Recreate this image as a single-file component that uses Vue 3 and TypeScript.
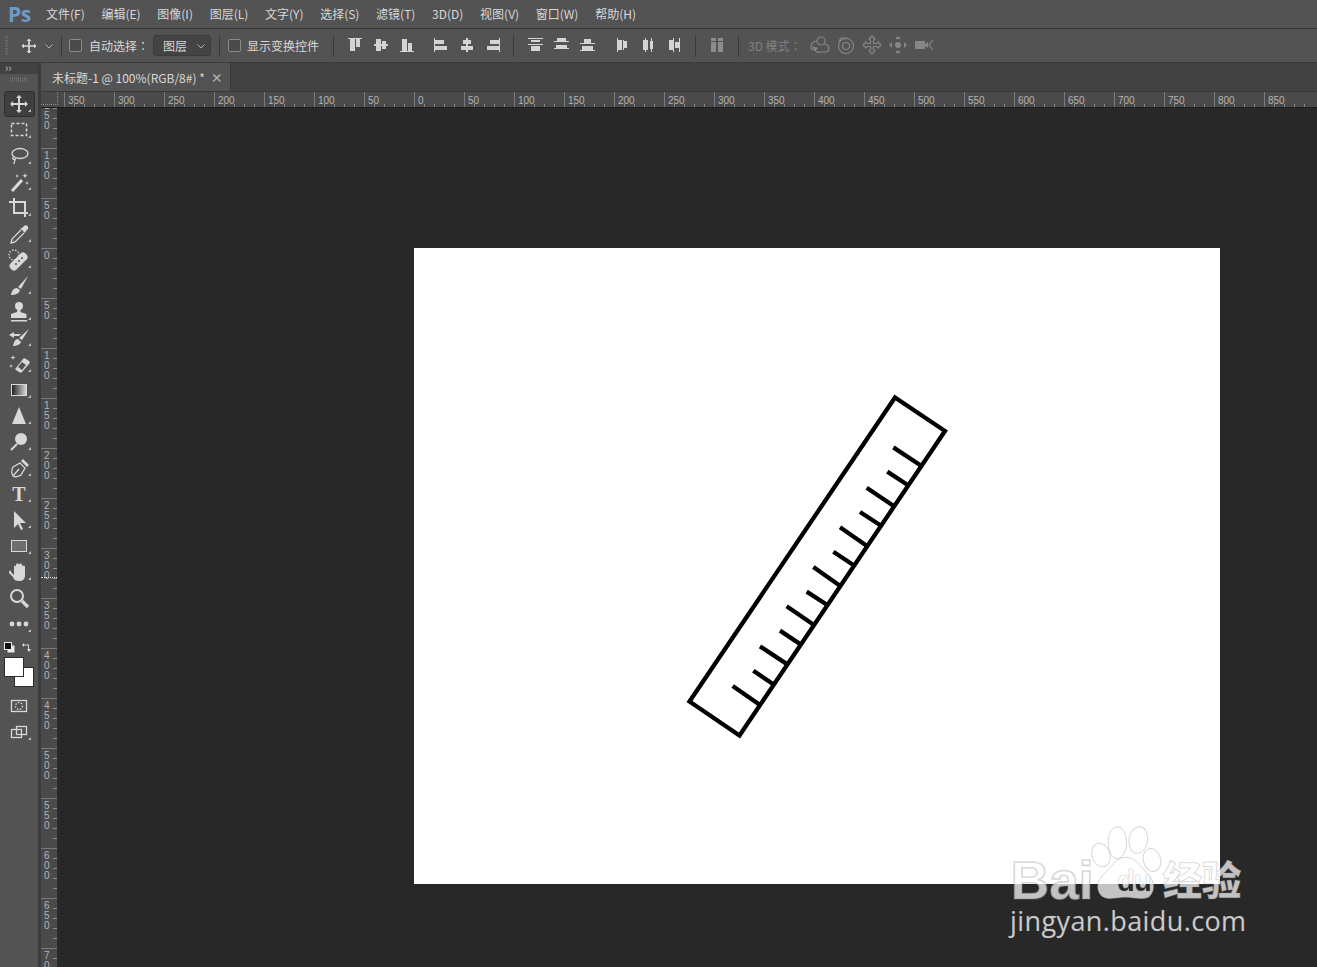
<script setup lang="ts">
const menus = ['文件(F)', '编辑(E)', '图像(I)', '图层(L)', '文字(Y)', '选择(S)', '滤镜(T)', '3D(D)', '视图(V)', '窗口(W)', '帮助(H)']

type Icon = number[][]
const alignA: Icon[] = [
  [[1, 1, 14, 1], [3, 2, 5, 12], [9, 2, 4, 8]],
  [[1, 7, 14, 2], [3, 2, 5, 12], [9, 4, 4, 8]],
  [[1, 14, 14, 1], [3, 2, 5, 12], [9, 6, 4, 8]],
]
const alignB: Icon[] = [
  [[1, 1, 1, 14], [2, 3, 9, 4], [2, 9, 12, 4]],
  [[7, 1, 2, 14], [4, 3, 8, 4], [2, 9, 12, 4]],
  [[14, 1, 1, 14], [5, 3, 9, 4], [2, 9, 12, 4]],
]
const distA: Icon[] = [
  [[0, 1, 15, 1], [3, 3, 9, 2], [0, 7, 15, 1], [3, 9, 9, 5]],
  [[0, 4, 15, 1], [3, 1, 9, 3], [0, 11, 15, 1], [2, 8, 11, 3]],
  [[0, 6, 15, 1], [4, 2, 7, 4], [0, 13, 15, 1], [2, 9, 11, 4]],
]
const distB: Icon[] = [
  [[3, 1, 1, 14], [4, 3, 4, 10], [9, 3, 1, 10], [10, 4, 3, 7]],
  [[5, 1, 1, 14], [3, 3, 2, 10], [6, 3, 2, 10], [11, 1, 1, 14], [10, 4, 1, 8], [12, 4, 1, 8]],
  [[7, 1, 1, 14], [3, 3, 4, 10], [13, 1, 1, 14], [9, 5, 4, 6]],
]

const hLabels = [350, 300, 250, 200, 150, 100, 50, 0, 50, 100, 150, 200, 250, 300, 350, 400, 450, 500, 550, 600, 650, 700, 750, 800, 850]
const vLabels = [150, 100, 50, 0, 50, 100, 150, 200, 250, 300, 350, 400, 450, 500, 550, 600, 650, 700]
const digits = (n: number) => String(n).split('')

const tickRaw = [
  [720, 240, 640, 187], [683, 300, 622, 260], [640, 362, 560, 308], [600, 420, 540, 381],
  [560, 482, 480, 427], [520, 540, 460, 500], [480, 602, 400, 546], [442, 660, 380, 620],
  [402, 720, 320, 664], [362, 778, 300, 737], [322, 838, 240, 784], [280, 898, 220, 857], [240, 960, 158, 903],
]
const ticks = tickRaw.map(([a, b, c, d]) => ({ x1: 680 + a / 3, y1: 385 + b / 3, x2: 680 + c / 3, y2: 385 + d / 3 }))
</script>

<template>
  <div class="app">
    <header class="menubar">
      <span class="logo">Ps</span>
      <nav class="menus">
        <span v-for="m in menus" :key="m">{{ m }}</span>
      </nav>
    </header>

    <section class="options">
      <span class="grip"></span>
      <svg class="opt-move" viewBox="0 0 24 24"><path d="M12 3l3 3h-2v5h5V9l3 3-3 3v-2h-5v5h2l-3 3-3-3h2v-5H6v2l-3-3 3-3v2h5V6H9z" /></svg>
      <svg class="chev" viewBox="0 0 10 10"><path d="M1.5 3.5L5 7l3.500-3.500" /></svg>
      <i class="sep s1"></i>
      <span class="check"></span>
      <span class="opt-label l1">自动选择<span class="tc">：</span></span>
      <span class="select">图层<svg class="chev small" viewBox="0 0 10 10"><path d="M1.500 3.500L5 7l3.500-3.500" /></svg></span>
      <i class="sep s2"></i>
      <span class="check"></span>
      <span class="opt-label l2">显示变换控件</span>
      <i class="sep s3"></i>
      <div class="icon-group g1">
        <svg v-for="(ic, i) in alignA" :key="i" class="al" viewBox="0 0 16 16"><rect v-for="(r, j) in ic" :key="j" :x="r[0]" :y="r[1]" :width="r[2]" :height="r[3]" /></svg>
      </div>
      <div class="icon-group g2">
        <svg v-for="(ic, i) in alignB" :key="i" class="al" viewBox="0 0 16 16"><rect v-for="(r, j) in ic" :key="j" :x="r[0]" :y="r[1]" :width="r[2]" :height="r[3]" /></svg>
      </div>
      <i class="sep s4"></i>
      <div class="icon-group g3">
        <svg v-for="(ic, i) in distA" :key="i" class="al" viewBox="0 0 16 16"><rect v-for="(r, j) in ic" :key="j" :x="r[0]" :y="r[1]" :width="r[2]" :height="r[3]" /></svg>
      </div>
      <div class="icon-group g4">
        <svg v-for="(ic, i) in distB" :key="i" class="al" viewBox="0 0 16 16"><rect v-for="(r, j) in ic" :key="j" :x="r[0]" :y="r[1]" :width="r[2]" :height="r[3]" /></svg>
      </div>
      <i class="sep s5"></i>
      <svg class="al dim g5" viewBox="0 0 16 16"><rect x="2" y="1" width="5" height="3" /><rect x="9" y="1" width="5" height="3" /><rect x="2" y="5" width="5" height="10" /><rect x="9" y="5" width="5" height="10" /></svg>
      <i class="sep s6"></i>
      <span class="opt-label l3">3D 模式<span class="tc">：</span></span>
      <div class="icon-group g6">
        <svg class="d3" viewBox="0 0 20 20"><circle cx="11" cy="6" r="4" /><path d="M7 6C3 6 1 9 1 12c0 2 2 3 4 3 1 2 4 3 6 2h4c3 0 4-2 4-4s-2-4-5-4" /><path class="solid" d="M2 11l6 2-3 3z" /></svg>
        <svg class="d3" viewBox="0 0 20 20"><circle cx="10" cy="11" r="7.500" /><circle cx="10" cy="11" r="3.500" /><path d="M3 6l2-3h6" /></svg>
        <svg class="d3" viewBox="0 0 20 20"><path d="M10 1l3 3-1.500 1v3.500H15L16 7l3 3-3 3-1-1.500h-3.500V15l1.500 1-3 3-3-3 1.500-1v-3.500H5L4 13l-3-3 3-3 1 1.500h3.500V5L7 4z" /></svg>
        <svg class="d3" viewBox="0 0 20 20"><circle class="solid" cx="10" cy="10" r="3" /><path class="solid" d="M10 1l3 3H7zM10 19l3-3H7zM1 10l3-3v6zM19 10l-3-3v6z" /></svg>
        <svg class="d3" viewBox="0 0 20 20"><rect class="solid" x="1" y="6" width="10" height="8" /><path class="solid" d="M11 9l3-2v6l-3-2z" /><path d="M19 5l-4 5 4 5" /></svg>
      </div>
    </section>

    <div class="main">
      <aside class="tools">
        <div class="tools-head"><span>››</span></div>
        <div class="tools-grip"></div>
        <button class="tool active"><svg viewBox="0 0 24 24"><path d="M12 3l3 3h-2v5h5V9l3 3-3 3v-2h-5v5h2l-3 3-3-3h2v-5H6v2l-3-3 3-3v2h5V6H9z" /></svg></button>
        <button class="tool"><svg viewBox="0 0 24 24"><rect class="line dash" x="4.500" y="5.500" width="15" height="12" /></svg></button>
        <button class="tool"><svg viewBox="0 0 24 24"><ellipse class="line" cx="13" cy="9.500" rx="8" ry="5" /><path class="line" d="M6 13c-1 2 1 3 2 2s-1 3-1 5" /></svg></button>
        <button class="tool"><svg viewBox="0 0 24 24"><path class="line thick" d="M5 21l10-11" /><path d="M18 3l.7 2 2 .7-2 .7-.7 2-.7-2-2-.7 2-.7zM10 4l.5 1.500L12 6l-1.500.5L10 8l-.5-1.500L8 6l1.500-.5zM20 11l.5 1.500 1.500.5-1.500.5-.5 1.500-.5-1.500-1.500-.5 1.500-.5z" /></svg></button>
        <button class="tool"><svg viewBox="0 0 24 24"><path class="line mid" d="M2 6h5M7 2v15h14M7 6h11v15" /></svg></button>
        <button class="tool"><svg viewBox="0 0 24 24"><path class="line" d="M14 8l-9 9-1 4 4-1 9-9" /><path d="M13 6l5 5 1-2 2-2c1-3-2-5-4-3l-2 2z" /></svg></button>
        <button class="tool"><svg viewBox="0 0 24 24"><path d="M3 16l11-11c2-1 3-1 5 1s2 4 1 5L9 22c-2 1-3 1-5-1s-2-3-1-5z" /><circle class="hole" cx="12" cy="13" r="1" /><circle class="hole" cx="15" cy="10" r="1" /><circle class="hole" cx="9" cy="16" r="1" /><circle class="line dots" cx="7" cy="7" r="5" /></svg></button>
        <button class="tool"><svg viewBox="0 0 24 24"><path d="M21 2L11 13l3 2zM10 14c-4 0-5 3-6 7 4 0 8-1 9-5z" /></svg></button>
        <button class="tool"><svg viewBox="0 0 24 24"><circle cx="12" cy="6" r="4" /><path d="M10.500 9h3v3l6 2v4H4v-4l6-2zM4 20h16v1.500H4z" /></svg></button>
        <button class="tool"><svg viewBox="0 0 24 24"><path d="M22 3L12 12l3 2zM11 13c-3 0-4 3-5 7 3 0 7-1 8-4z" /><path d="M2 9l5-3v2h7l-2 2H7v2z" /></svg></button>
        <button class="tool"><svg viewBox="0 0 24 24"><path d="M9 16l7-9c1-1 2-1 3 0l3 2c1 1 1 2 0 3l-7 8c-1 1-2 1-3 0l-3-2c-1-1-1-1 0-2z" /><path class="hole" d="M11 15l4-5 4 3-4 5z" /><path d="M6 3l.6 2 2 .6-2 .6-.6 2-.6-2-2-.6 2-.6zM4 12l.5 1.500 1.500.5-1.500.5-.5 1.500-.5-1.500L2 14l1.500-.5z" /></svg></button>
        <button class="tool"><svg viewBox="0 0 24 24"><defs><linearGradient id="gr"><stop offset="0" stop-color="#1c1c1c" /><stop offset="1" stop-color="#dcdcdc" /></linearGradient></defs><rect x="4.500" y="6.500" width="15" height="11" fill="url(#gr)" stroke="#d8d8d8" /></svg></button>
        <button class="tool"><svg viewBox="0 0 24 24"><path d="M12 3l7 17H5z" /></svg></button>
        <button class="tool"><svg viewBox="0 0 24 24"><circle cx="14" cy="9" r="6" /><path class="line mid" d="M10 14l-6 6" /></svg></button>
        <button class="tool"><svg viewBox="0 0 24 24"><path class="line" d="M6 20c-2-3-1-7 0-9l7-4 5 5-4 7c-2 1-5 3-8 1zM6 20l6-7" /><path d="M14 5l2-2 6 6-2 2z" /></svg></button>
        <button class="tool"><span class="type">T</span></button>
        <button class="tool"><svg viewBox="0 0 24 24"><path d="M7 3v17l4-4 3 6 2-1-3-6h6z" /></svg></button>
        <button class="tool"><svg viewBox="0 0 24 24"><rect x="4.500" y="6.500" width="15" height="11" fill="#6e6e6e" stroke="#d8d8d8" /></svg></button>
        <button class="tool"><svg viewBox="0 0 24 24"><path d="M4 12l3 3V7c0-2 2-2 2 0V5c0-2 3-2 3 0v0c0-2 3-2 3 0v2c0-2 3-2 3 0v8c0 4-2 6-6 6-3 0-5-1-6-4l-4-4c0-2 1-3 2-2z" /></svg></button>
        <button class="tool plain"><svg viewBox="0 0 24 24"><circle class="line mid" cx="10" cy="10" r="6" /><path class="line thick" d="M15 15l6 6" /></svg></button>
        <button class="tool"><svg viewBox="0 0 24 24"><circle cx="5" cy="12" r="2.400" /><circle cx="12" cy="12" r="2.400" /><circle cx="19" cy="12" r="2.400" /></svg></button>

        <div class="colors">
          <div class="color-top">
            <svg class="mini" viewBox="0 0 11 11"><rect x="3.500" y="3.500" width="7" height="7" fill="#e8e8e8" /><rect x="0.500" y="0.500" width="7" height="7" fill="#111" stroke="#e8e8e8" /></svg>
            <svg class="swap" viewBox="0 0 11 11"><path d="M1 3l2-2v1.500h5V7H10L8 10 6 7h1V3.500H3V5z" /></svg>
          </div>
          <div class="swatches"><span class="bg"></span><span class="fg"></span></div>
        </div>
        <button class="tool plain mask"><svg viewBox="0 0 24 24"><rect class="line" x="4.500" y="6.500" width="15" height="11" /><circle class="line dots" cx="12" cy="12" r="3.500" /></svg></button>
        <button class="tool screen"><svg viewBox="0 0 24 24"><rect class="line" x="9.500" y="6.500" width="10" height="8" /><rect class="line" x="4.500" y="9.500" width="10" height="8" fill="#535353" /></svg></button>
      </aside>

      <div class="doc-area">
        <div class="tabbar">
          <div class="tab">未标题-1 @ 100%(RGB/8#) *<span class="close">×</span></div>
        </div>
        <div class="hruler-row">
          <div class="corner"></div>
          <div class="hruler">
            <span v-for="(n, i) in hLabels" :key="i" class="hseg">{{ n }}</span>
          </div>
        </div>
        <div class="body">
          <div class="vruler">
            <div v-for="(n, i) in vLabels" :key="i" class="vseg">
              <span v-for="(d, j) in digits(n)" :key="j">{{ d }}</span>
            </div>
            <i class="cursor"></i>
          </div>
          <div class="workspace">
            <div class="page">
              <svg class="drawing" viewBox="414 248 806 636">
                <polygon points="895,397.500 945,431 739.500,735.500 689.500,701.500" />
                <line v-for="(t, i) in ticks" :key="i" :x1="t.x1" :y1="t.y1" :x2="t.x2" :y2="t.y2" />
              </svg>
            </div>
            <svg class="watermark" viewBox="0 0 810 450">
              <defs>
                <mask id="cut">
                  <rect width="810" height="450" fill="#fff" />
                  <text x="381" y="243" class="wm-du" fill="#000">du</text>
                </mask>
              </defs>
              <g class="paw">
                <ellipse cx="333" cy="135" rx="27" ry="36" transform="rotate(-18 333 135)" />
                <ellipse cx="382" cy="98" rx="28" ry="48" />
                <ellipse cx="445" cy="90" rx="28" ry="40" transform="rotate(8 445 90)" />
                <ellipse cx="486" cy="150" rx="26" ry="35" transform="rotate(-15 486 150)" />
                <path mask="url(#cut)" d="M408 142c30 0 45 30 65 50 22 22 24 50 5 68-18 12-50 2-72 2-26 0-58 12-74 -6-16-22-10-46 12-66 22-20 34-48 64-48z" />
              </g>
              <text x="62" y="268" class="wm-bai">Bai</text>
              <text x="381" y="243" class="wm-du ghost">du</text>
              <text x="518" y="254" class="wm-cn">经验</text>
              <text x="60" y="362" class="wm-url">jingyan.baidu.com</text>
            </svg>
          </div>
        </div>
      </div>
    </div>
  </div>
</template>

<style>
html, body { margin: 0; background: #282828; overflow: hidden; }
</style>

<style scoped>
.app {
  width: 1317px; height: 967px; overflow: hidden;
  display: flex; flex-direction: column;
  background: #535353; color: #d8d8d8;
  font-family: "Noto Sans CJK SC", "Noto Sans", sans-serif; font-size: 12px;
}
.menubar {
  height: 28px; flex: none; display: flex; align-items: center;
  border-bottom: 1px solid #383838; box-sizing: content-box;
}
.logo {
  width: 46px; padding-left: 8px; box-sizing: border-box;
  font: bold 21px "Open Sans", sans-serif; color: #6d9ccb; letter-spacing: -0.500px;
}
.menus { display: flex; gap: 16.700px; line-height: 28px; white-space: nowrap; }
.menus span { font-size: 12px; }

.options {
  height: 33px; flex: none; display: flex; align-items: center;
  border-bottom: 1px solid #3a3a3a; position: relative;
}
.options svg { flex: none; }
.tc { font-family: "Noto Sans CJK TC", sans-serif; }
.grip {
  width: 3px; height: 20px; margin-left: 5px;
  background: repeating-linear-gradient(#6a6a6a 0 1px, transparent 1px 2px);
}
.opt-move { width: 20px; height: 20px; margin-left: 11px; fill: #d8d8d8; }
.chev { width: 10px; height: 10px; margin-left: 5px; fill: none; stroke: #b0b0b0; stroke-width: 1; }
.sep { flex: none; display: block; width: 1px; height: 22px; background: #3a3a3a; }
.s1 { margin-left: 7px; }
.check {
  flex: none; width: 11px; height: 11px; margin-left: 7px;
  border: 1px solid #8a8a8a; border-radius: 2px; background: #4a4a4a;
}
.opt-label { flex: none; white-space: nowrap; }
.l1 { margin-left: 7px; width: 57px; }
.select {
  flex: none; width: 58px; height: 21px; margin-left: 7px; box-sizing: border-box;
  display: flex; align-items: center; padding-left: 9px;
  background: #444; border: 1px solid #3b3b3b; border-radius: 3px;
}
.chev.small { margin-left: 9px; }
.s2 { margin-left: 8px; }
.options .s2 + .check { margin-left: 8px; }
.l2 { margin-left: 6px; width: 72px; }
.s3 { margin-left: 14px; }
.icon-group { flex: none; display: flex; gap: 10px; margin-top: -1px; }
.al { width: 16px; height: 16px; fill: #d4d4d4; }
.g1 { margin-left: 13px; }
.g2 { margin-left: 18px; }
.s4 { margin-left: 12px; }
.g3 { margin-left: 14px; }
.g4 { margin-left: 18px; }
.s5 { margin-left: 13px; }
.g5 { margin-left: 13px; fill: #8c8c8c; margin-top: -1px; }
.s6 { margin-left: 13px; }
.l3 { margin-left: 9px; width: 60px; color: #828282; }
.g6 { margin-left: 2px; gap: 6px; }
.d3 { width: 20px; height: 20px; fill: none; stroke: #868686; stroke-width: 1.200; }
.d3 .solid { fill: #868686; stroke: none; }

.main { flex: 1; display: flex; min-height: 0; }
.tools {
  width: 38px; flex: none; display: flex; flex-direction: column; align-items: center;
  border-right: 3px solid #3c3c3c; box-sizing: content-box;
}
.tools-head {
  align-self: stretch; height: 11px; background: #424242;
  font-size: 11px; line-height: 9px; color: #c8c8c8; padding-left: 5px;
}
.tools-grip {
  width: 18px; height: 5px; margin: 3px 0 9px;
  background: repeating-linear-gradient(90deg, #6a6a6a 0 1px, transparent 1px 2px);
}
.tool {
  flex: none; width: 31px; height: 26px; padding: 0; border: 1px solid transparent; background: none;
  display: flex; align-items: center; justify-content: center; position: relative; box-sizing: border-box;
}
.tool::after {
  content: ""; position: absolute; right: 3px; bottom: 4px; width: 0; height: 0;
  border-left: 3px solid transparent; border-bottom: 3px solid #c0c0c0;
}
.tool.plain::after { display: none; }
.tool.active { background: #3f3f3f; border-color: #2f2f2f; border-radius: 3px; }
.tool svg { width: 24px; height: 24px; fill: #d8d8d8; flex: none; }
.tool .line { fill: none; stroke: #d8d8d8; stroke-width: 1.300; }
.tool .line.mid { stroke-width: 2; }
.tool .line.thick { stroke-width: 3.200; }
.tool .dash { stroke-width: 1.500; stroke-dasharray: 3 2; }
.tool .dots { stroke-dasharray: 1.500 1.500; }
.tool .hole { fill: #535353; }
.type { font: bold 20px "Liberation Serif", serif; color: #d8d8d8; line-height: 22px; }
.colors { align-self: stretch; height: 56px; padding-top: 5px; box-sizing: border-box; }
.color-top { display: flex; justify-content: space-between; padding: 0 6px 0 4px; height: 13px; }
.mini { width: 11px; height: 11px; }
.swap { width: 11px; height: 11px; fill: #d8d8d8; }
.swatches { position: relative; height: 30px; margin-top: 2px; }
.swatches span { position: absolute; width: 18px; height: 18px; background: #fff; border: 1px solid #2c2c2c; box-sizing: content-box; }
.fg { left: 4px; top: 0; }
.bg { left: 14px; top: 10px; }
.mask { margin-top: 0; }

.doc-area { flex: 1; min-width: 0; display: flex; flex-direction: column; }
.tabbar { height: 29px; flex: none; background: #424242; display: flex; border-bottom: 1px solid #383838; box-sizing: border-box; }
.tab {
  width: 190px; height: 28px; box-sizing: border-box; padding-left: 11px;
  display: flex; align-items: center; background: #535353; white-space: nowrap;
  font-size: 12px; border-right: 1px solid #3a3a3a;
}
.close { margin-left: 6px; font-size: 12px; font-weight: 700; color: #b5b5b5; }
.hruler-row { height: 15px; flex: none; display: flex; background: #4a4a4a; border-bottom: 1px solid #1c1c1c; box-sizing: content-box; }
.corner {
  flex: none; box-sizing: border-box; width: 17px;
  border-right: 1px dotted #8d8d8d; border-bottom: 1px dotted #8d8d8d; margin: 0 6px 2px 0;
}
.hruler { flex: 1; display: flex; overflow: hidden; margin-left: -17px; padding-left: 17px; white-space: nowrap; }
.hseg {
  flex: none; width: 50px; box-sizing: border-box; padding: 3px 0 0 3px; border-left: 1px solid #7a7a7a;
  font: 10px/12px "Liberation Sans", sans-serif; color: #b4b4b4;
  background: repeating-linear-gradient(90deg, transparent 0 9px, #8a8a8a 9px 10px) 0 100% / 100% 3px no-repeat;
}
.body { flex: 1; display: flex; min-height: 0; }
.vruler {
  width: 17px; flex: none; background: #4a4a4a; overflow: hidden; position: relative;
  border-right: 1px solid #2e2e2e; box-sizing: border-box;
}
.vseg {
  height: 50px; box-sizing: border-box; margin-top: 0; border-top: 1px solid #7a7a7a;
  display: flex; flex-direction: column; align-items: flex-start; padding: 2px 0 0 3px;
  font: 10px/10px "Liberation Sans", sans-serif; color: #b4b4b4;
  background: repeating-linear-gradient(transparent 0 9px, #8a8a8a 9px 10px) 100% 0 / 4px 100% no-repeat;
}
.vseg:first-child { margin-top: -10px; }
.vseg span { display: block; height: 10px; }
.cursor { position: absolute; left: 0; right: 0; top: 469px; border-top: 1px dotted #e8e8e8; }
.workspace { flex: 1; position: relative; background: #282828; padding: 140px 0 0 356px; min-width: 0; overflow: hidden; box-sizing: border-box; }
.page { width: 806px; height: 636px; background: #fff; }
.drawing { display: block; width: 806px; height: 636px; fill: none; stroke: #000; stroke-width: 4.300; stroke-linejoin: miter; }
.watermark { position: absolute; left: 932px; top: 702px; width: 270px; height: 150px; }
.paw { fill: rgba(255, 255, 255, .72); stroke: rgba(130, 130, 130, .32); stroke-width: 3; }
.wm-bai { font: 900 160px "Liberation Sans", sans-serif; fill: rgba(255, 255, 255, .72); stroke: rgba(130, 130, 130, .32); stroke-width: 5; }
.wm-du { font: bold 88px "Liberation Sans", sans-serif; letter-spacing: -3px; }
.wm-du.ghost { fill: none; stroke: rgba(130, 130, 130, .4); stroke-width: 2; }
.wm-cn { font: 900 118px "Noto Sans CJK SC", sans-serif; fill: rgba(255, 255, 255, .72); stroke: rgba(130, 130, 130, .3); stroke-width: 3; }
.wm-url { font: 500 81px "Open Sans", sans-serif; fill: rgba(255, 255, 255, .8); stroke: rgba(130, 130, 130, .35); stroke-width: 2; letter-spacing: 1.200px; }
</style>
